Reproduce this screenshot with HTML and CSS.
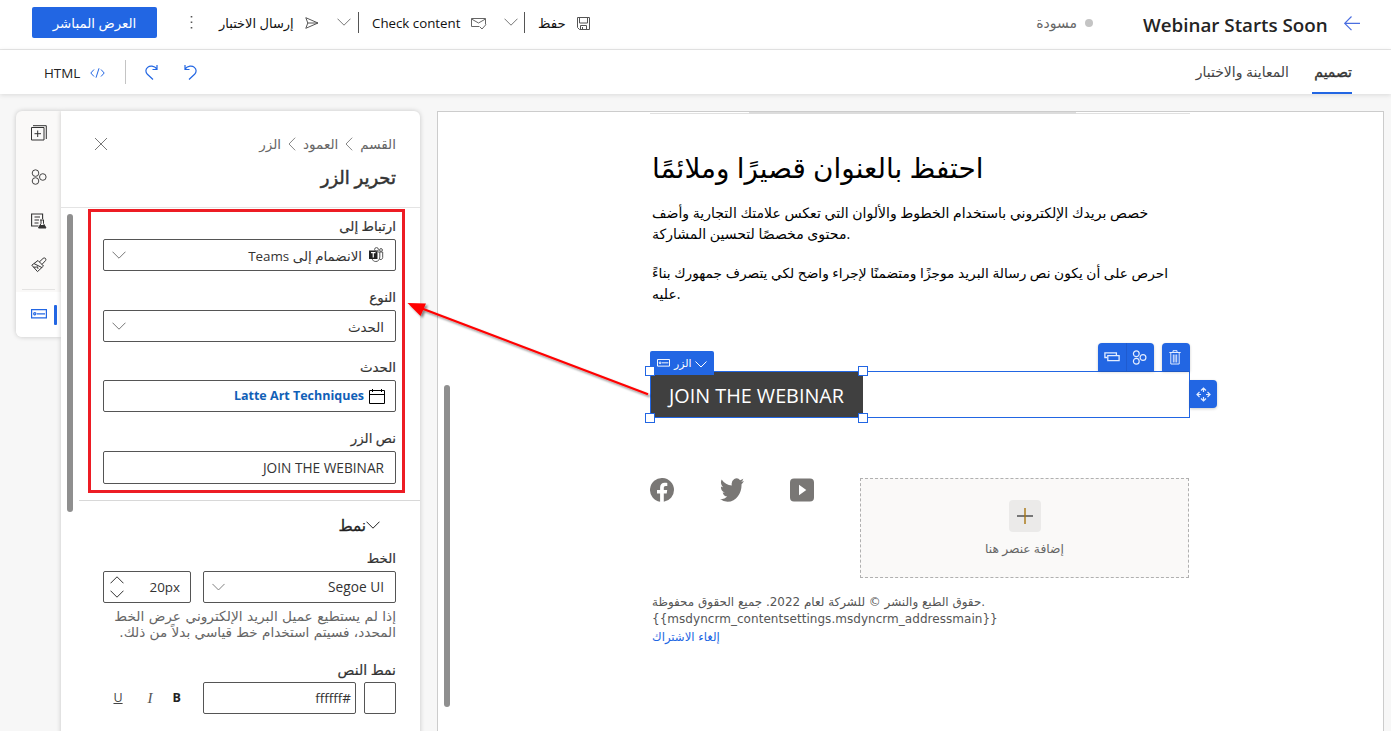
FILE: index.html
```html
<!DOCTYPE html>
<html lang="ar" dir="rtl">
<head>
<meta charset="utf-8">
<title>Webinar Starts Soon</title>
<link rel="stylesheet" href="styles.css">
</head>
<body>
<svg class="defs" width="0" height="0">
  <symbol id="chev" viewBox="0 0 14 8"><path d="M.5.7 7 7.200 13.500.7" fill="none" stroke="currentColor"/></symbol>
  <symbol id="circles" viewBox="0 0 16 16"><g fill="none" stroke="currentColor" stroke-width="1.100"><path d="M2.600.8h3.600l1.700 3.200-1.700 3.200H2.600L.9 4zM2.600 8.800h3.600l1.700 3.200-1.700 3.200H2.600L.9 12zM9.800 4.800h3.600L15.100 8l-1.700 3.200H9.800L8.100 8z" stroke-linejoin="round"/></g></symbol>
  <symbol id="btnicon" viewBox="0 0 16 10"><g fill="none" stroke="currentColor" stroke-width="1.200"><path d="M.6.6h14.800v8.300H.6z"/><circle cx="3.800" cy="4.800" r="1.100"/><path d="M6 4.800h8"/></g></symbol>
</svg>

<header class="topbar">
  <svg class="back" width="16" height="15" viewBox="0 0 16 15"><path d="M7.500.5.7 7.300l6.800 6.800M1 7.300h15" fill="none" stroke="#4a6ee0" stroke-width="1.200"/></svg>
  <h1 class="title" dir="ltr">Webinar Starts Soon</h1>
  <div class="status"><i class="dot"></i><span class="t-draft">مسودة</span></div>
  <div class="commands" dir="ltr">
    <button class="live"><span class="t-live">العرض المباشر</span></button>
    <svg class="more" width="3" height="13" viewBox="0 0 3 13"><path d="M.7 0h1.600v1.600H.7zM.7 5.500h1.600v1.600H.7zM.7 11h1.600v1.600H.7z" fill="#555"/></svg>
    <span class="cmd t-send">إرسال الاختبار</span>
    <svg class="send" width="14" height="12" viewBox="0 0 14 12"><path d="M.8.7 13 6 .8 11.300 2.800 6zM2.800 6H13" fill="none" stroke="#555"/></svg>
    <svg class="cv cv1" width="14" height="8"><use href="#chev"/></svg>
    <i class="bar"></i>
    <span class="cmd t-check">Check content</span>
    <svg class="mail" width="16" height="13" viewBox="0 0 16 13"><path d="M8 9.500H.5v-8h14v6M.5 2 7.500 6l7-4M8.500 9.500l2.500 2.500 4-4.500" fill="none" stroke="#666"/></svg>
    <svg class="cv cv2" width="14" height="8"><use href="#chev"/></svg>
    <i class="bar bar-end"></i>
    <span class="cmd t-save">حفظ</span>
    <svg class="save" width="13" height="13" viewBox="0 0 13 13"><path d="M.5.5h12v12h-10l-2-2zM2.500.5v5.500h8V.5M3.500 12.500v-4h6v4M5.500 10v2" fill="none" stroke="#555"/></svg>
  </div>
</header>

<nav class="tabs">
  <a class="tab active">تصميم</a>
  <a class="tab t-preview">المعاينة والاختبار</a>
  <div class="edit" dir="ltr">
    <span class="html">HTML</span>
    <svg class="code" width="15" height="10" viewBox="0 0 15 10"><path d="M4 1.500.8 5 4 8.500M11 1.500 14.200 5 11 8.500M9 .3 6 9.700" fill="none" stroke="#2266e3"/></svg>
    <i class="bar2"></i>
    <svg class="redo" width="13" height="15" viewBox="0 0 13 15"><path d="M12 0v4.500H7.500M12 4C9 .6 5 .4 2.600 2.400.3 4.400.4 7.300 2.400 9.300L8 14.500" fill="none" stroke="#2266e3" stroke-width="1.200"/></svg>
    <svg class="undo" width="13" height="15" viewBox="0 0 13 15"><path d="M1 0v4.500h4.500M1 4C4 .6 8 .4 10.400 2.400c2.300 2 2.200 4.900.2 6.900L5 14.500" fill="none" stroke="#2266e3" stroke-width="1.200"/></svg>
  </div>
</nav>

<main class="work">
  <section class="canvas" dir="ltr">
    <div class="vscroll"></div>
    <div class="mail-body">
      <div class="strip"><i></i></div>
      <h2 class="heading">احتفظ بالعنوان قصيرًا وملائمًا</h2>
      <div class="para">
        <p class="l1">خصص بريدك الإلكتروني باستخدام الخطوط والألوان التي تعكس علامتك التجارية وأضف</p>
        <p class="l2">محتوى مخصصًا لتحسين المشاركة.</p>
        <p class="l3">احرص على أن يكون نص رسالة البريد موجزًا ومتضمنًا لإجراء واضح لكي يتصرف جمهورك بناءً</p>
        <p class="l4">عليه.</p>
      </div>
      <div class="selected">
        <div class="cta">JOIN THE WEBINAR</div>
        <div class="tag"><svg width="13" height="8" viewBox="0 0 16 10" preserveAspectRatio="none"><use href="#btnicon"/></svg><span class="t-tag">الزر</span><svg class="tag-cv" width="12" height="7" viewBox="0 0 12 7"><path d="M.5.5 6 6 11.500.5" fill="none" stroke="#fff"/></svg></div>
        <i class="h tl"></i><i class="h tr"></i><i class="h bl"></i><i class="h br"></i>
        <div class="tools">
          <b><svg width="16" height="10" viewBox="0 0 16 10"><path d="M3 5.500H.9V.8h11.500V3M3.800 3.700h11.300v5H3.800z" fill="none" stroke="#e4edff" stroke-width="1.300"/></svg></b>
          <b><svg width="15" height="15" viewBox="0 0 15 15"><g fill="none" stroke="#e4edff" stroke-width="1.200"><circle cx="4.300" cy="3.800" r="2.900"/><circle cx="4.300" cy="11.200" r="2.900"/><circle cx="11" cy="7.500" r="2.900"/></g></svg></b>
        </div>
        <div class="trash"><svg width="12" height="15" viewBox="0 0 12 15"><path d="M.3 2.500h11.400M4 2.300V.7h4v1.600M1.800 2.500V14h8.400V2.500M4.300 4.500v8M6 4.500v8M7.700 4.500v8" fill="none" stroke="#e4edff"/></svg></div>
        <div class="move"><svg width="15" height="15" viewBox="0 0 15 15"><path d="M5 3.500 7.500 1 10 3.500M7.500 1.500V5M5 11.500 7.500 14 10 11.500M7.500 13.500V10M3.500 5 1 7.500 3.500 10M1.500 7.500H5M11.500 5 14 7.500 11.500 10M13.500 7.500H10" fill="none" stroke="#e4edff" stroke-width="1.200"/></svg></div>
      </div>
      <div class="bottom">
        <svg width="24" height="24" viewBox="0 0 24 24"><path fill="#797775" d="M24 12a12 12 0 1 0-13.900 11.850V15.500H7V12h3.100V9.400c0-3 1.800-4.700 4.500-4.700 1.300 0 2.700.2 2.700.2v3h-1.500c-1.500 0-2 .9-2 1.900V12h3.400l-.5 3.500h-2.900v8.350A12 12 0 0 0 24 12z"/></svg>
        <svg width="24" height="24" viewBox="0 2 24 20" preserveAspectRatio="none"><path fill="#797775" d="M23.950 4.570a10 10 0 0 1-2.820.77 4.960 4.960 0 0 0 2.160-2.720c-.95.550-2 .95-3.130 1.180a4.920 4.920 0 0 0-8.380 4.480C7.690 8.100 4.070 6.130 1.640 3.160a4.820 4.820 0 0 0-.67 2.480c0 1.710.87 3.210 2.190 4.100a4.900 4.900 0 0 1-2.230-.62v.06a4.920 4.920 0 0 0 3.950 4.830 5 5 0 0 1-2.210.08 4.940 4.940 0 0 0 4.600 3.420A9.870 9.870 0 0 1 0 19.540a14 14 0 0 0 7.550 2.210c9.050 0 14-7.500 14-13.980 0-.21 0-.42-.02-.63a9.900 9.900 0 0 0 2.420-2.570z"/></svg>
        <svg width="24" height="24" viewBox="0 0 24 24"><path fill="#797775" fill-rule="evenodd" d="M4 .5h16a4 4 0 0 1 4 4v15a4 4 0 0 1-4 4H4a4 4 0 0 1-4-4v-15a4 4 0 0 1 4-4zM9 6.700v10.600l7.300-5.300z"/></svg>
        <div class="drop">
          <div class="plus"><svg width="16" height="16" viewBox="0 0 16 16"><path d="M0 8h16" stroke="#777" stroke-width="2"/><path d="M8 0v16" stroke="#a8740f" stroke-width="1.400"/></svg></div>
          <span class="t-add">إضافة عنصر هنا</span>
        </div>
      </div>
      <div class="foot">
        <p class="f1">حقوق الطبع والنشر © للشركة لعام 2022. جميع الحقوق محفوظة.</p>
        <p class="f2">{{msdyncrm_contentsettings.msdyncrm_addressmain}}</p>
        <p class="f3">إلغاء الاشتراك</p>
      </div>
    </div>
  </section>

  <aside class="panel">
    <div class="phead">
      <div class="crumbs"><span>القسم</span><svg width="8" height="14" viewBox="0 0 8 14"><path d="M7.200.7 1 7l6.200 6.300" fill="none" stroke="#888"/></svg><span>العمود</span><svg width="8" height="14" viewBox="0 0 8 14"><path d="M7.200.7 1 7l6.200 6.300" fill="none" stroke="#888"/></svg><span>الزر</span>
        <svg class="close" width="14" height="14" viewBox="0 0 14 14"><path d="m1 1 12 12M13 1 1 13" stroke="#777"/></svg></div>
      <h3>تحرير الزر</h3>
    </div>
    <div class="pscroll"></div>
    <div class="redbox"></div>
    <div class="fields">
      <label>ارتباط إلى</label>
      <div class="box"><svg width="16" height="16" viewBox="0 0 16 16"><path d="M1 3.500h8.500v8.500H1z" fill="#222"/><path d="M3 5.700h4.500M5.250 5.700v4.800" stroke="#fff" stroke-width="1.200"/><g fill="none" stroke="#555"><circle cx="8.500" cy="2.500" r="1.900"/><circle cx="13" cy="3" r="1.400"/><path d="M10 5h4.700v5.500c0 1.500-1.400 2.300-2.800 2M11.800 5v5c0 3-2 4.500-4 4.500s-3-1-3.500-2.300"/></g></svg><span class="t-teams">الانضمام إلى <bdi>Teams</bdi></span><svg class="cv end" width="14" height="8"><use href="#chev"/></svg></div>
      <label class="g15">النوع</label>
      <div class="box"><span class="t-event">الحدث</span><svg class="cv end" width="14" height="8"><use href="#chev"/></svg></div>
      <label class="g14">الحدث</label>
      <div class="box event"><svg width="16" height="15" viewBox="0 0 16 15"><path d="M.5 1.500h15v13H.5zM.5 5.500h15M3.500 0v3M12.500 0v3" fill="none" stroke="#000"/></svg><b class="t-latte">Latte Art Techniques</b></div>
      <label class="g15">نص الزر</label>
      <div class="box tall"><span class="t-join">JOIN THE WEBINAR</span></div>
    </div>
    <div class="style">
      <div class="shead"><svg width="14" height="8"><use href="#chev"/></svg><span>نمط</span></div>
      <label>الخط</label>
      <div class="row">
        <div class="box font"><span class="t-seg">Segoe UI</span><svg class="cv end" width="13" height="8"><use href="#chev"/></svg></div>
        <div class="box size"><span>20px</span><div class="spin"><svg width="14" height="8" class="up"><use href="#chev"/></svg><svg width="14" height="8"><use href="#chev"/></svg></div></div>
      </div>
      <div class="help"><p class="h1">إذا لم يستطيع عميل البريد الإلكتروني عرض الخط</p><p class="h2">المحدد، فسيتم استخدام خط قياسي بدلاً من ذلك.</p></div>
      <label class="g18">نمط النص</label>
      <div class="row">
        <div class="box swatch"></div>
        <div class="box hex"><span>#ffffff</span></div>
        <div class="fmt"><b>B</b><i>I</i><u>U</u></div>
      </div>
    </div>
  </aside>

  <div class="rail">
    <svg width="16" height="16" viewBox="0 0 16 16"><path d="M.5 2.500h12.500v12.500H.5zM2 .7h13.300V14M6.700 5.500v6.500M3.500 8.700H10" fill="none" stroke="#333"/></svg>
    <svg width="16" height="16" viewBox="0 0 16 16"><g fill="none" stroke="#444"><circle cx="4.500" cy="4.100" r="3.300"/><circle cx="4.500" cy="12" r="3.300"/><circle cx="11.800" cy="8" r="3.300"/></g></svg>
    <svg width="16" height="16" viewBox="0 0 16 16"><path d="M7.500 13H.6V1h11v5M3.500 4h5.500M3.500 7h4.500M3.500 10h4" fill="none" stroke="#333" stroke-width="1.100"/><path d="M9 7h4M10 7v3.500L7.500 15h7.500L12.500 10.500V7" fill="none" stroke="#333"/><path d="m9 12-1.500 3h7.500L13.500 12z" fill="#333"/></svg>
    <svg width="16" height="16" viewBox="0 0 16 16"><path d="M7 3.500.8 8.200 6.500 14.600l6-5.600zM3 6.600l8 4M8.300 5l3.900-3.700c1.800-1 3.400.5 2.400 2.200L11 7.400M2.500 10c2 .6 4-.3 4-.3l.5 2.200" fill="none" stroke="#333"/></svg>
    <div class="cur"><svg width="16" height="10"><use href="#btnicon"/></svg><i></i></div>
  </div>
</main>

<svg class="pointer" width="260" height="110" viewBox="400 295 260 110"><g filter="url(#sh)"><path d="M422 308.500 648 394.300" stroke="#f00" stroke-width="2.200"/><path d="m407.500 303 18.500.5-5.500 12.500z" fill="#f00"/></g><filter id="sh" x="-10%" y="-10%" width="120%" height="130%"><feDropShadow dx="2" dy="2" stdDeviation="1" flood-opacity=".45"/></filter></svg>
</body>
</html>
```
FILE: styles.css
```css
* { box-sizing: border-box; }
html, body { margin: 0; }
body { position: relative; width: 1391px; height: 731px; overflow: hidden; background: #f7f7f7; color: #222; font: 13.4px/20px "Open Sans", "DejaVu Sans", sans-serif; }
h1, h2, h3, p { margin: 0; font-weight: 400; }
svg { display: block; flex: none; }
i { display: block; }
span, p, label, b, h1, h2, h3, a { white-space: nowrap; }
.defs { position: absolute; }

/* top bar */
.topbar { display: flex; height: 50px; background: #fff; border-bottom: 1px solid #e8e8e8; padding-right: 31px; }
.back { margin-top: 16px; }
.title { width: 185px; margin: 11px 16px 0 0; font-size: 18.8px; line-height: 28px; font-weight: 600; color: #242424; }
.status { display: flex; margin: 13px 50px 0 0; color: #666; }
.t-draft { font-size: 14px; }
.dot { width: 8px; height: 8px; border-radius: 50%; background: #c4c4c4; margin: 6px 0 0 8px; }
.commands { display: flex; margin-right: auto; width: 591px; padding-top: 13px; }
.commands > * { flex: none; }
.live { width: 125px; height: 31px; margin: -6px 0 0 32px; border: 0; border-radius: 2px; background: #2266e3; color: #fff; font: inherit; padding: 0; }
.more { margin: 3px 0 0 33px; }
.cmd { color: #111; }
.t-send { width: 76px; margin-left: 26px; font-size: 13px; }
.send { margin: 4px 0 0 10px; }
.cv { color: #777; }
.cv1 { margin: 5px 0 0 18px; }
.cv2 { margin: 5px 0 0 17px; }
.bar { width: 1px; height: 21px; margin: -1px 0 0 7px; background: #555; }
.bar-end { margin-left: 6px; }
.t-check { width: 89px; margin-left: 13px; font-size: 13.300px; }
.mail { margin: 4px 0 0 10px; }
.t-save { width: 28px; margin-left: 13px; }
.save { margin: 4px 0 0 11px; }

/* tab row */
.tabs { position: relative; display: flex; height: 44px; background: #fff; padding-right: 39px; box-shadow: 0 1px 5px rgba(0,0,0,.12); }
.tab { margin-left: 23px; padding-top: 12px; color: #444; }
.tab.active { width: 40px; border-bottom: 2px solid #2266e3; color: #333; font-size: 14px; -webkit-text-stroke: .4px; }
.t-preview { font-size: 14px; }
.edit { display: flex; margin-right: auto; margin-left: 43px; width: 155px; padding: 12px 0 0 1px; }
.html { width: 37px; margin-top: 1px; }
.code { margin: 6px 0 0 9px; }
.bar2 { width: 1px; height: 24px; margin: -2px 0 0 20px; background: #c4c4c4; }
.redo { margin: 3px 26px 0 19px; }
.undo { margin-top: 3px; }

/* workspace */
.work { display: flex; padding: 17px 7px 0 16px; height: 637px; align-items: flex-start; }
.canvas { position: relative; width: 947px; height: 625px; flex: none; background: #fff; border: 1px solid #ccc; padding-left: 212px; }
.vscroll { position: absolute; left: 6px; top: 273px; width: 6px; height: 322px; border-radius: 3px; background: #8f8f8f; }
.mail-body { width: 540px; color: #000; }
.strip { height: 2px; border-bottom: 1px solid #e0e0e0; padding-left: 99px; }
.strip i { width: 327px; height: 2px; background: #dcdcdc; }
.heading { margin: 33px 0 0 2px; font-size: 27.9px; line-height: 40px; }
.para { margin: 15px 0 0 2px; font-size: 14.050px; line-height: 21px; }
.l3 { margin-top: 18px; font-size: 13.750px; }
.selected { position: relative; width: 540px; height: 47px; margin-top: 67px; border: 1px solid #2266e3; }
.cta { width: 212px; height: 45px; background: #404040; color: #fff; font-size: 19.800px; line-height: 47px; padding-left: 18px; white-space: nowrap; }
.tag { position: absolute; left: -1px; top: -21px; width: 64px; height: 24px; background: #2266e3; color: #fff; border-radius: 2px 2px 0 0; display: flex; align-items: center; gap: 4px; padding-left: 7px; font-size: 10.800px; }
.tag-cv { margin-top: 2px; }
.h { position: absolute; width: 10px; height: 10px; background: #fff; border: 1px solid #2266e3; }
.tl, .bl { left: -6px; }
.tr, .br { left: 207px; }
.tl, .tr { top: -6px; }
.bl, .br { top: 41px; }
.tools, .trash, .move { position: absolute; display: flex; height: 28px; background: #2266e3; border-radius: 4px 4px 0 0; box-shadow: 0 1px 3px rgba(0,0,0,.2); }
.tools { left: 447px; top: -29px; width: 56px; }
.tools b, .trash, .move { display: flex; width: 28px; align-items: center; justify-content: center; padding-right: 2px; }
.tools b:first-child { padding-right: 0; }
.tools b + b { border-left: 1px solid #1f5bd0; }
.trash { left: 511px; top: -29px; }
.move { left: 539px; top: 8px; width: 27px; padding-right: 0; border-radius: 0 4px 4px 0; }
.bottom { display: flex; gap: 46px; margin-top: 60px; }
.drop { width: 329px; height: 100px; background: #faf9f8; border: 1px dashed #b0b0b0; display: flex; flex-direction: column; align-items: center; padding-top: 21px; color: #666; font-size: 12.3px; }
.plus { width: 32px; height: 32px; border-radius: 4px; background: #ebeae9; display: grid; place-items: center; margin-bottom: 7px; }
.foot { margin: 16px 0 0 2px; color: #555; font-family: "DejaVu Sans", sans-serif; font-size: 12px; line-height: 17px; }
.f1 { font-size: 11.950px; }
.f2 { letter-spacing: .04px; }
.f3 { color: #2266e3; padding-top: 1px; font-size: 11.700px; }

/* properties panel */
.panel { position: relative; width: 359px; height: 625px; margin-right: 17px; flex: none; background: #fff; border-radius: 0 6px 0 0; box-shadow: 0 0 5px rgba(0,0,0,.2); z-index: 1; }
.phead { height: 97px; border-bottom: 1px solid #e4e4e4; padding: 23px 24px 0 39px; }
.crumbs { display: flex; align-items: center; gap: 7px; color: #666; font-size: 13.500px; }
.close { margin-right: auto; margin-left: -6px; }
.phead h3 { margin-top: 9px; font-size: 18px; line-height: 28px; color: #333; -webkit-text-stroke: .5px; }
.pscroll { position: absolute; left: 6px; top: 103px; width: 6px; height: 298px; border-radius: 3px; background: #8f8f8f; }
.redbox { position: absolute; left: 27px; top: 98px; width: 317px; height: 284px; border: 3px solid #ed1c24; }
.fields { padding: 8px 24px 0 42px; height: 292px; }
label { display: block; height: 23px; line-height: 21px; color: #333; -webkit-text-stroke: .2px; }
.g15 { margin-top: 16px; }
.g14 { margin-top: 15px; }
.g18 { margin-top: 19px; font-size: 14px; }
.box { display: flex; align-items: center; height: 32px; border: 1px solid #555; border-radius: 2px; padding: 0 11px 0 8px; color: #333; }
.box.tall { height: 33px; }
.end { margin-right: auto; }
.box > svg:first-child { margin-left: 6px; }
.t-teams, .t-event { padding-top: 2px; }
.event { padding-right: 10px; }
.event b { color: #1160b7; font-size: 12.500px; font-weight: 700; margin-right: -1px; }
.t-join, .t-seg { font-size: 13.700px; }
.style { margin-left: 18px; border-top: 1px solid #d8d8d8; padding: 0 24px; }
.shead { display: flex; align-items: center; height: 47px; padding: 0 16px 0 0; font-size: 15.300px; -webkit-text-stroke: .3px; }
.row { display: flex; }
.font { width: 193px; }
.size { width: 88px; margin-right: 12px; padding: 0 10px 0 6px; }
.spin { margin-right: auto; display: grid; gap: 6px; color: #333; }
.up { transform: scaleY(-1); }
.help { color: #666; font-family: "DejaVu Sans", sans-serif; font-size: 13.600px; line-height: 16px; padding-top: 5px; }
.help .h1 { font-size: 13.750px; }
.swatch { width: 32px; }
.hex { width: 153px; margin-right: 8px; padding: 0 4px; }
.fmt { display: flex; align-items: center; margin-right: 22px; gap: 20px; color: #222; font-size: 12.500px; }
.fmt i { width: 10px; font-family: "Liberation Serif", serif; font-size: 15px; color: #555; }
.fmt u { color: #444; }

/* icon rail */
.rail { width: 45px; height: 226px; background: #faf9f8; border-radius: 6px 0 0 6px; overflow: hidden; box-shadow: 0 0 5px rgba(0,0,0,.2); display: flex; flex-direction: column; align-items: center; gap: 28px; padding-top: 14px; color: #444; }
.cur { position: relative; direction: ltr; width: 45px; height: 45px; flex: none; margin-top: -9px; background: #fff; color: #2266e3; padding: 17px 0 0 15px; }
.cur::before { content: ""; position: absolute; left: 6px; top: -3px; width: 33px; height: 1px; background: #e4e3e2; }
.cur i { position: absolute; left: 38px; top: 13px; width: 3px; height: 20px; border-radius: 1px; background: #2266e3; }
.pointer { position: absolute; left: 400px; top: 295px; z-index: 3; }
```
